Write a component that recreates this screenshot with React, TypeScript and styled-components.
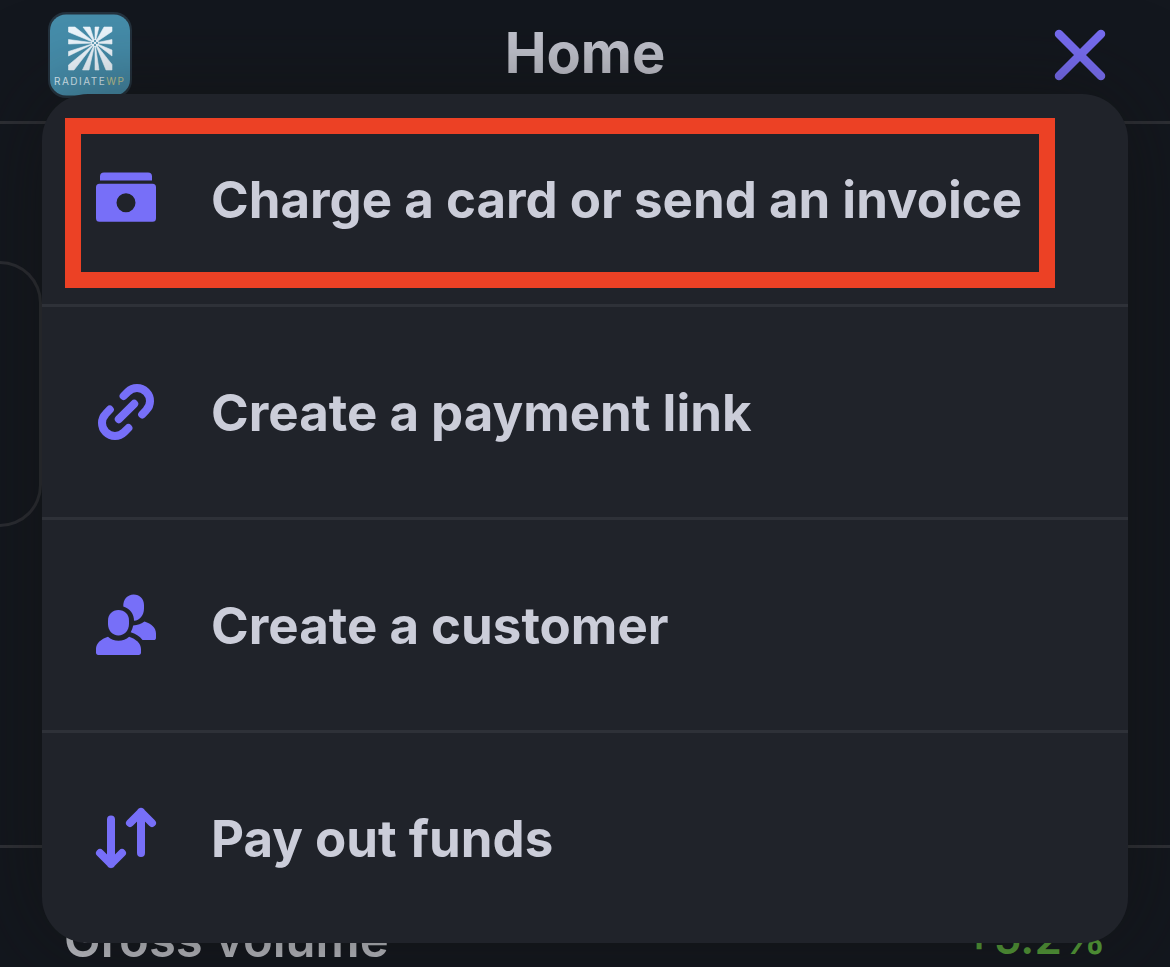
import React from "react";
import styled, { createGlobalStyle } from "styled-components";

const GlobalStyle = createGlobalStyle`
  *, *::before, *::after { box-sizing: border-box; }
  body {
    margin: 0;
    background: #13171e;
    color: #cbcdd9;
    font-family: Inter, "Liberation Sans", sans-serif;
    overflow: hidden;
  }
  button { font: inherit; color: inherit; }
`;

const Page = styled.div`
  position: relative;
  height: 100vh;
  overflow: hidden;
`;

const Header = styled.header`
  display: grid;
  grid-template-columns: 1fr auto 1fr;
  align-items: start;
  height: 124px;
  padding: 12px 48px 0;
  border-bottom: 3px solid #2d2f35;
`;

const Logo = styled.svg`
  display: block;
  width: 84px;
  height: 86px;
`;

const Title = styled.h1`
  margin: 8px 0 0;
  font-size: 56px;
  line-height: 66px;
  font-weight: 700;
  color: #c3c5cf;
`;

const CloseButton = styled.button`
  justify-self: end;
  display: flex;
  margin: 13px 12px 0 0;
  padding: 0;
  border: 0;
  background: none;
  cursor: pointer;
`;

const Promo = styled.section`
  width: 42px;
  height: 266px;
  margin-top: 137px;
  border: 3px solid #2b2d33;
  border-left: 0;
  border-radius: 0 42px 42px 0;
`;

const Volume = styled.section`
  display: flex;
  justify-content: space-between;
  align-items: flex-start;
  margin-top: 318px;
  padding: 60px 64px 0;
  border-top: 3px solid #2f3137;
`;

const VolumeTitle = styled.h2`
  margin: 0;
  font-size: 49px;
  line-height: 64px;
  font-weight: 600;
  color: #bfc1c8;
`;

const Change = styled.span`
  font-size: 44px;
  line-height: 60px;
  font-weight: 600;
  color: #56a03a;
`;

const Menu = styled.ul`
  position: absolute;
  top: 94px;
  left: 42px;
  right: 42px;
  margin: 0;
  padding: 0;
  list-style: none;
  border-radius: 46px;
  background: #20232a;
  box-shadow: 0 0 90px rgba(20, 18, 16, 0.5);
`;

const MenuItem = styled.li`
  position: relative;
  & + & { border-top: 3px solid #2e3138; }
`;

const MenuButton = styled.button`
  display: flex;
  align-items: center;
  gap: 55px;
  width: 100%;
  height: 210px;
  padding: 0 54px;
  border: 0;
  background: none;
  font-size: 51px;
  line-height: 64px;
  font-weight: 700;
  text-align: left;
  white-space: nowrap;
  cursor: pointer;
`;

const Label = styled.span`
  padding-top: 2px;
`;

const Icon = styled.svg`
  flex: none;
  width: 60px;
  height: 60px;
  overflow: visible;
  color: #776ff8;
`;

const Highlight = styled.div`
  position: absolute;
  inset: 24px 73px 16px 23px;
  border: 16px solid #ec4125;
  pointer-events: none;
`;

const stroke = {
  fill: "none",
  stroke: "currentColor",
  strokeWidth: 8,
  strokeLinecap: "round" as const,
  strokeLinejoin: "round" as const,
};

const CashIcon = () => (
  <Icon viewBox="0 0 60 60" fill="currentColor" aria-hidden="true">
    <path d="M4 11.5V7.5a4 4 0 0 1 4-4h44a4 4 0 0 1 4 4v4z" />
    <path
      fillRule="evenodd"
      d="M3.5 14.8h53a3.5 3.5 0 0 1 3.5 3.5v31a3.5 3.5 0 0 1-3.5 3.5h-53a3.5 3.5 0 0 1-3.5-3.5v-31a3.5 3.5 0 0 1 3.5-3.5zM30 24.200a9.5 9.5 0 1 0 0 19 9.500 9.500 0 0 0 0-19z"
    />
  </Icon>
);

const LinkIcon = () => (
  <Icon viewBox="0 0 60 60" aria-hidden="true" {...stroke}>
    <path d="M22.800 37.200 38.200 21.800M27.600 14l4.200-4.200a13 13 0 0 1 18.400 18.400L46.200 32.400M32.400 46l-4.200 4.200A13 13 0 0 1 9.800 31.800L13.800 27.600" />
  </Icon>
);

const PeopleIcon = () => (
  <Icon viewBox="0 0 60 60" fill="currentColor" aria-hidden="true">
    <path d="M22.400 15C28.600 15 33 19.300 33 25.500v3.500C33 35.500 28.400 40.400 22.400 40.400S12 35.500 12 29v-3.500C12 19.300 16.400 15 22.400 15z" />
    <path d="M12 41.800c2.800 2.500 6.500 3.900 10.500 3.900s7.800-1.400 10.600-3.900C40 44 45 48.500 45 54v3.500c0 1.500-.8 2.400-2.300 2.400H2.300C.8 59.900 0 59 0 57.500V54c0-5.500 5-10 12-12.200z" />
    <path d="M27.300 11.500C27 4.500 31.500-.4 37.600-.4 43.700-.4 48 4 48 10v3.500c0 6.700-4.300 12-10 12.300.2-6.500-3.800-12-10.700-14.300z" />
    <path d="M37.200 30.400c4.500-.1 8.300-1.500 11.300-3.900C55.500 28.700 60 33 60 38.500v4.200c0 1.500-.8 2.400-2.300 2.400H46.500C43.500 41 39.500 38.500 34.700 37.200c1.200-2 2-4.300 2.500-6.800z" />
  </Icon>
);

const ArrowsIcon = () => (
  <Icon viewBox="0 0 60 60" aria-hidden="true" {...stroke}>
    <path d="M15 11.500V56M4 45l11 11 11-11M45 45V4M34 15 45 4l11 11" />
  </Icon>
);

const items = [
  { label: "Charge a card or send an invoice", icon: <CashIcon />, highlighted: true },
  { label: "Create a payment link", icon: <LinkIcon /> },
  { label: "Create a customer", icon: <PeopleIcon /> },
  { label: "Pay out funds", icon: <ArrowsIcon /> },
];

// Each ray is the stretch of the square's edge it ends on; all meet at 47,31.
const rays = [
  "20.500 20 20.500 15 27 15",
  "35 15 42 15",
  "47 15 51 15",
  "56 15 64 15 64 19.500",
  "64 27.500 64 32",
  "64 38 64 44",
  "64 52.500 64 58 58 58",
  "51 58 47 58",
  "41 58 34.500 58",
  "26 58 20.500 58 20.500 53",
  "20.500 44 20.500 39.500",
  "20.500 32 20.500 27.500",
];

const RadiateLogo = () => (
  <Logo viewBox="0 0 84 86" role="img" aria-label="RadiateWP">
    <rect x="0" y="0" width="84" height="86" rx="18" fill="#24323e" />
    <rect x="2" y="2.500" width="80" height="81" rx="16" fill="#468eac" />
    <g fill="#eff8ff" stroke="#eff8ff" strokeWidth="0.600">
      {rays.map((edge) => (
        <polygon key={edge} points={`47 31 ${edge}`} />
      ))}
      <circle cx="47" cy="31" r="3.500" />
    </g>
    <path
      fill="#468eac"
      d="M46.200 28h1.600v2h-1.600zM44 30.200h2v1.600h-2zM48 30.200h2v1.600h-2zM46.200 32h1.600v2h-1.600z"
    />
    <text x="6" y="73" fontFamily="Inter, sans-serif" fontSize="10" letterSpacing="1.500" fill="#dceef8">
      RADIATE<tspan fill="#c3cb98">WP</tspan>
    </text>
  </Logo>
);

export default function App() {
  return (
    <Page>
      <GlobalStyle />
      <Header>
        <RadiateLogo />
        <Title>Home</Title>
        <CloseButton aria-label="Close">
          <svg width="60" height="60" viewBox="0 0 60 60" aria-hidden="true">
            <path d="M9 9 51 51M51 9 9 51" fill="none" stroke="#786df3" strokeWidth="8.500" strokeLinecap="round" />
          </svg>
        </CloseButton>
      </Header>
      <main>
        <Promo />
        <Volume>
          <VolumeTitle>Gross volume</VolumeTitle>
          <Change>+5.2%</Change>
        </Volume>
      </main>
      <Menu>
        {items.map((item) => (
          <MenuItem key={item.label}>
            <MenuButton>
              {item.icon}
              <Label>{item.label}</Label>
            </MenuButton>
            {item.highlighted && <Highlight />}
          </MenuItem>
        ))}
      </Menu>
    </Page>
  );
}
